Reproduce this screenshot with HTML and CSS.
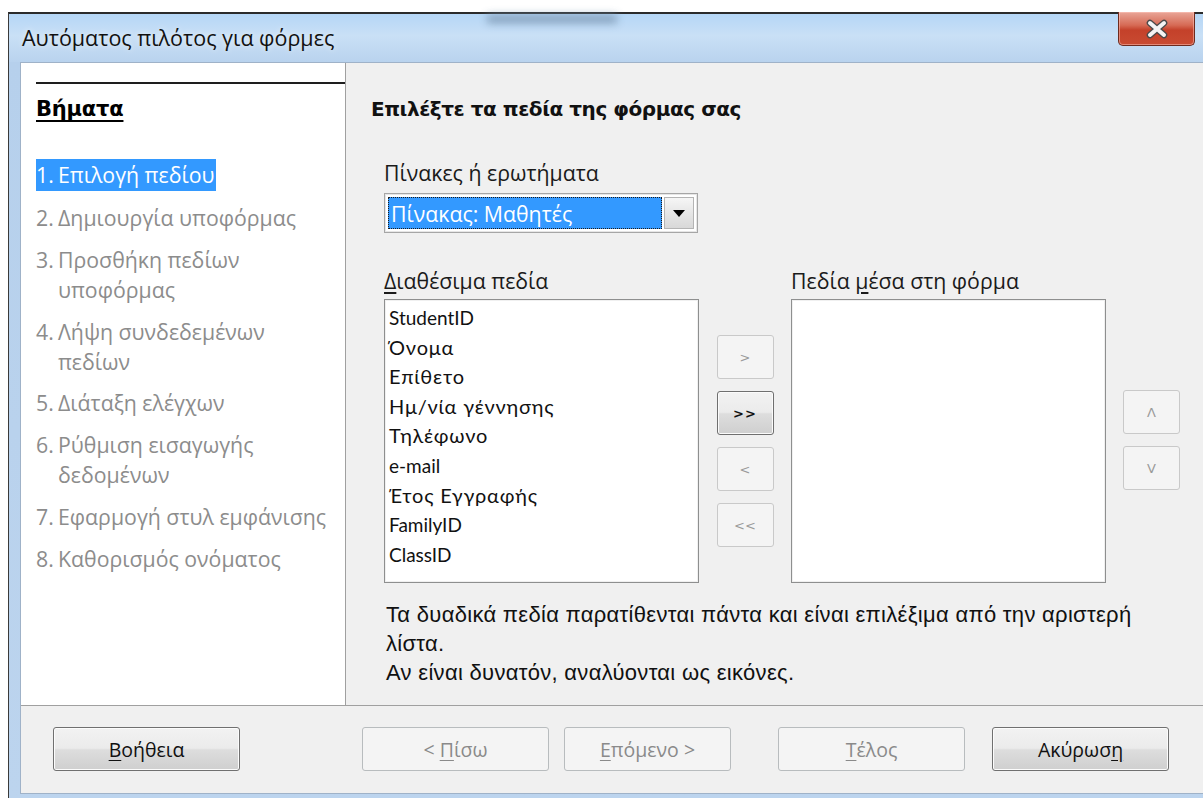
FILE: index.html
```html
<!DOCTYPE html>
<html lang="el">
<head>
<meta charset="utf-8">
<title>Αυτόματος πιλότος για φόρμες</title>
<link rel="stylesheet" href="styles.css">
</head>
<body>
<div class="window">
  <div class="titlebar">
    <span class="title">Αυτόματος πιλότος για φόρμες</span>
    <div class="behind"></div>
    <button class="close" aria-label="Κλείσιμο">
      <svg width="26" height="20" viewBox="0 0 26 20">
        <path d="M6 4 L20 16 M20 4 L6 16" stroke="#4a4a4a" stroke-width="6.6" stroke-linecap="round"/>
        <path d="M6 4 L20 16 M20 4 L6 16" stroke="#f4f4f4" stroke-width="4" stroke-linecap="round"/>
      </svg>
    </button>
  </div>
  <div class="frame">
    <div class="client">
      <div class="body">
        <aside class="steps">
          <div class="steps-rule"></div>
          <h2 class="steps-head">Βήματα</h2>
          <ol class="step-list">
            <li class="step current"><span class="sel"><span class="num">1.</span>Επιλογή πεδίου</span></li>
            <li class="step"><span class="num">2.</span><span class="lbl">Δημιουργία υποφόρμας</span></li>
            <li class="step"><span class="num">3.</span><span class="lbl">Προσθήκη πεδίων<br>υποφόρμας</span></li>
            <li class="step"><span class="num">4.</span><span class="lbl">Λήψη συνδεδεμένων<br>πεδίων</span></li>
            <li class="step"><span class="num">5.</span><span class="lbl">Διάταξη ελέγχων</span></li>
            <li class="step"><span class="num">6.</span><span class="lbl">Ρύθμιση εισαγωγής<br>δεδομένων</span></li>
            <li class="step"><span class="num">7.</span><span class="lbl">Εφαρμογή στυλ εμφάνισης</span></li>
            <li class="step"><span class="num">8.</span><span class="lbl">Καθορισμός ονόματος</span></li>
          </ol>
        </aside>
        <main class="page">
          <h1 class="page-head">Επιλέξτε τα πεδία της φόρμας σας</h1>
          <div class="field">
            <label class="lab">Πίνακες ή ερωτήματα</label>
            <div class="combo">
              <div class="combo-value"><span>Πίνακας: Μαθητές</span></div>
              <div class="combo-btn">
                <svg width="12" height="7" viewBox="0 0 12 7"><path d="M0 0 H12 L6 7 Z" fill="#000"/></svg>
              </div>
            </div>
          </div>
          <div class="lists">
            <div class="col">
              <label class="lab"><u>Δ</u>ιαθέσιμα πεδία</label>
              <ul class="listbox">
                <li>StudentID</li>
                <li class="gr">Όνομα</li>
                <li class="gr">Επίθετο</li>
                <li class="gr">Ημ/νία γέννησης</li>
                <li class="gr">Τηλέφωνο</li>
                <li>e-mail</li>
                <li class="gr">Έτος Εγγραφής</li>
                <li>FamilyID</li>
                <li>ClassID</li>
              </ul>
            </div>
            <div class="movers">
              <button class="sbtn off">&gt;</button>
              <button class="sbtn on">&gt;&gt;</button>
              <button class="sbtn off">&lt;</button>
              <button class="sbtn off">&lt;&lt;</button>
            </div>
            <div class="col">
              <label class="lab">Πεδία <u>μ</u>έσα στη φόρμα</label>
              <ul class="listbox"></ul>
            </div>
            <div class="order">
              <button class="sbtn off">&#923;</button>
              <button class="sbtn off">V</button>
            </div>
          </div>
          <p class="note">Τα δυαδικά πεδία παρατίθενται πάντα και είναι επιλέξιμα από την αριστερή<br>λίστα.<br>Αν είναι δυνατόν, αναλύονται ως εικόνες.</p>
        </main>
      </div>
      <div class="buttons">
        <button class="btn"><u>Β</u>οήθεια</button>
        <div class="nav">
          <button class="btn off">&lt; <u>Π</u>ίσω</button>
          <button class="btn off next"><u>Ε</u>πόμενο &gt;</button>
          <button class="btn off"><u>Τ</u>έλος</button>
          <button class="btn cancel">Ακύρωσ<u>η</u></button>
        </div>
      </div>
    </div>
  </div>
</div>
</body>
</html>
```

FILE: styles.css
```css
html, body {
  margin: 0;
  padding: 0;
  background: #ffffff;
  overflow: hidden;
}

body {
  font-family: "Open Sans", "Noto Sans", sans-serif;
  color: #1a1a1a;
}

.window {
  margin: 12px 0 0 8px;
  height: 786px;
  border-top: 2px solid #2b2b2b;
  border-left: 1px solid #3a3a3a;
  background: linear-gradient(180deg, #d6e6f6 0px, #c6dcf2 30px, #b6d0ec 48px, #bcd4ee 100%);
  display: flex;
  flex-direction: column;
}

/* caption */
.titlebar {
  position: relative;
  height: 48px;
  display: flex;
  align-items: center;
  padding-left: 13px;
  background: linear-gradient(180deg, #b5d6f6 0%, #c9e0f6 45%, #b9d3ee 100%);
}

.title {
  font-size: 21.5px;
  color: #111;
  text-shadow: 0 0 6px rgba(255, 255, 255, 0.7);
  margin-top: -1px;
}

.behind {
  position: absolute;
  left: 478px;
  top: 1px;
  width: 130px;
  height: 8px;
  background: #7590ab;
  filter: blur(4px);
  opacity: 0.8;
}

.close {
  position: absolute;
  right: 8px;
  top: -2px;
  width: 77px;
  height: 34px;
  border: 1px solid #6d2a1e;
  border-top: none;
  border-radius: 0 0 5px 5px;
  background: linear-gradient(180deg, #e9a698 0%, #d66a55 40%, #c4412a 55%, #c94b32 100%);
  box-shadow: inset 0 0 0 1px rgba(255, 200, 190, 0.5);
  display: flex;
  align-items: center;
  justify-content: center;
  padding: 0;
}

.frame {
  flex: 1;
  padding: 0 0 6px 11px;
  display: flex;
}

.client {
  flex: 1;
  background: #f0f0f0;
  border: 1px solid #9fb2c8;
  border-right: none;
  display: flex;
  flex-direction: column;
}

.body {
  display: flex;
  height: 642px;
  border-bottom: 1px solid #a0a0a0;
}

/* left: wizard steps */
.steps {
  width: 309px;
  flex: none;
  background: #ffffff;
  border-right: 1px solid #a0a0a0;
  padding-left: 15px;
}

.steps-rule {
  margin-top: 19px;
  border-top: 2px solid #1e1e1e;
}

.steps-head {
  margin: 10px 0 0 0;
  font-family: "DejaVu Sans", sans-serif;
  font-size: 21px;
  font-weight: bold;
  text-decoration: underline;
  text-underline-offset: 4px;
  color: #000;
  line-height: 30px;
  letter-spacing: -0.2px;
}

.step-list {
  list-style: none;
  margin: 35px 0 0 0;
  padding: 0;
}

.step {
  display: flex;
  font-size: 21.3px;
  line-height: 30px;
  color: #8c8c8c;
  margin-bottom: 11.8px;
  white-space: nowrap;
}

.num {
  width: 22px;
  flex: none;
}

.step.current {
  margin-bottom: 12px;
}

.sel {
  display: flex;
  background: #3399ff;
  color: #ffffff;
  padding-right: 2px;
  height: 32px;
  line-height: 32px;
}

/* right: page */
.page {
  flex: 1;
  padding-left: 25px;
}

.page-head {
  margin: 31px 0 0 0;
  font-family: "DejaVu Sans", sans-serif;
  font-size: 20px;
  font-weight: bold;
  color: #111;
  line-height: 30px;
  letter-spacing: -0.45px;
}

.field {
  margin-top: 34px;
  padding-left: 13px;
}

.lab {
  display: block;
  font-size: 21.3px;
  line-height: 30px;
  color: #1a1a1a;
}

.lab u {
  text-underline-offset: 3px;
}

.combo {
  margin-top: 5px;
  width: 314px;
  height: 40px;
  border: 1px solid #a6a6a6;
  box-shadow: inset 0 0 0 1px #e6e6e6;
  background: #ffffff;
  display: flex;
  align-items: center;
  padding: 0 3px;
  box-sizing: border-box;
  gap: 2px;
}

.combo-value {
  flex: 1;
  height: 32px;
  background: #3399ff;
  border: 1px dotted #1c1c1c;
  box-sizing: border-box;
  display: flex;
  align-items: center;
  padding-left: 2px;
  color: #ffffff;
  font-size: 21.3px;
}

.combo-btn {
  width: 30px;
  height: 32px;
  box-sizing: border-box;
  border: 1px solid #b4b4b4;
  background: linear-gradient(180deg, #f6f6f6, #e6e6e6 50%, #d8d8d8);
  display: flex;
  align-items: center;
  justify-content: center;
}

.lists {
  display: flex;
  margin-top: 33px;
  padding-left: 13px;
}

.col {
  width: 315px;
  flex: none;
}

.listbox {
  list-style: none;
  margin: 3px 0 0 0;
  padding: 3px 0 0 4px;
  height: 284px;
  box-sizing: border-box;
  width: 315px;
  background: #ffffff;
  border: 1px solid #8e8f8f;
  box-shadow: inset 0 0 0 1px #f0f0f0;
}

.listbox li {
  font-family: "Lato", "Open Sans", sans-serif;
  font-size: 19px;
  line-height: 29.6px;
  color: #111;
  white-space: nowrap;
}

.listbox li.gr {
  font-size: 20px;
  letter-spacing: 0.8px;
}

.movers {
  width: 92px;
  flex: none;
  display: flex;
  flex-direction: column;
  align-items: center;
  padding-top: 69px;
  gap: 12px;
  box-sizing: border-box;
}

.order {
  flex: none;
  display: flex;
  flex-direction: column;
  padding: 124px 0 0 17px;
  gap: 12px;
}

.sbtn {
  width: 57px;
  height: 44px;
  box-sizing: border-box;
  border-radius: 3px;
  font-family: "DejaVu Sans", sans-serif;
  font-size: 13px;
  padding: 0;
}

.sbtn.off {
  border: 1px solid #c9c9c9;
  background: #f4f4f4;
  color: #9a9a9a;
}

.sbtn.on {
  border: 1px solid #6f6f6f;
  background: linear-gradient(180deg, #f2f2f2 0%, #ebebeb 48%, #dddddd 52%, #cfcfcf 100%);
  color: #111;
  font-weight: bold;
  box-shadow: inset 0 0 0 1px #fbfbfb;
  letter-spacing: 1px;
}

.note {
  margin: 17px 0 0 15px;
  font-family: "Liberation Sans", sans-serif;
  font-size: 22px;
  line-height: 29px;
  color: #111;
  letter-spacing: 0.3px;
}

/* bottom buttons */
.buttons {
  flex: 1;
  display: flex;
  align-items: flex-start;
  padding: 21px 0 0 32px;
}

.nav {
  display: flex;
  margin-left: 122px;
}

.btn {
  width: 187px;
  height: 44px;
  box-sizing: border-box;
  border-radius: 3px;
  font-family: "Open Sans", sans-serif;
  font-size: 19.5px;
  color: #111;
  border: 1px solid #707070;
  background: linear-gradient(180deg, #f2f2f2 0%, #ebebeb 48%, #dddddd 52%, #cfcfcf 100%);
  box-shadow: inset 0 0 0 1px #fcfcfc;
  padding: 0;
}

.btn u {
  text-underline-offset: 3px;
}

.btn.off {
  border: 1px solid #b8bcbe;
  background: #f4f4f4;
  color: #8a8a8a;
  box-shadow: none;
}

.nav .btn {
  margin-right: 15px;
}

.nav .btn.next {
  width: 167px;
  margin-right: 47px;
}

.nav .btn.cancel {
  width: 177px;
  margin-left: 12px;
}
```
